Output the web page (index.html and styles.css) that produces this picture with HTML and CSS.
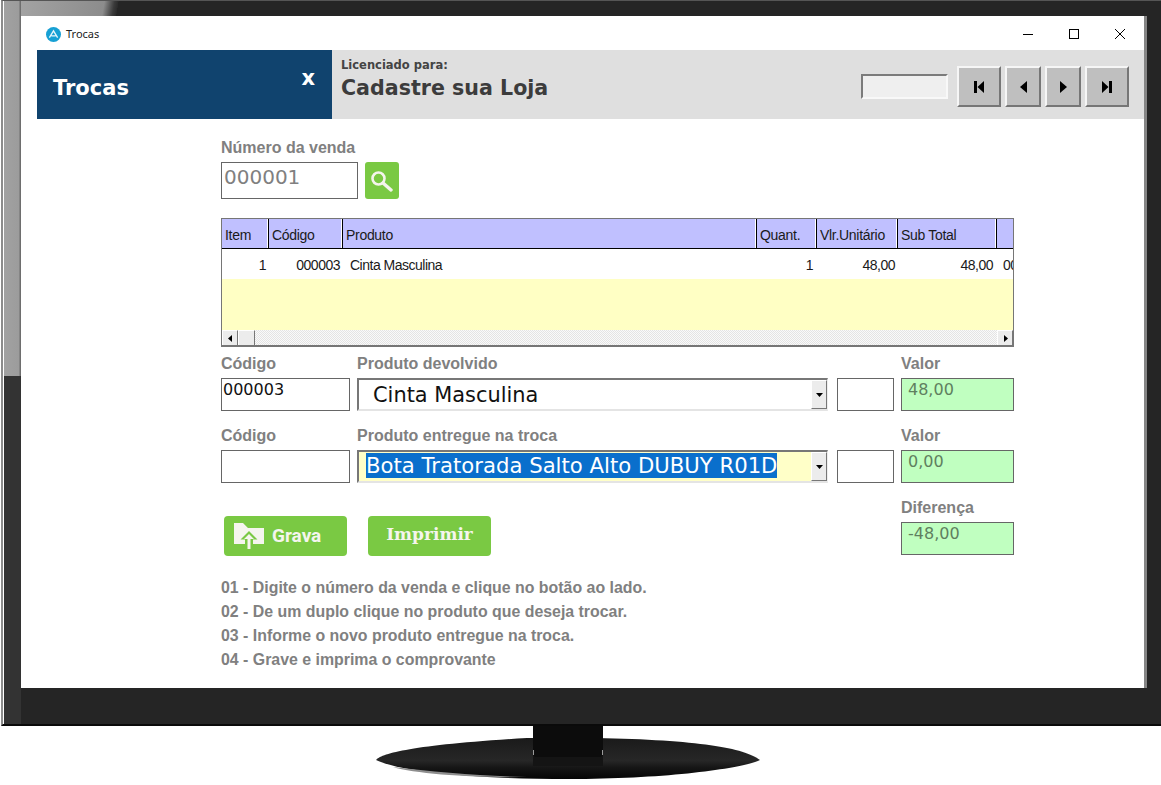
FILE: index.html
```html
<!DOCTYPE html>
<html lang="pt">
<head>
<meta charset="utf-8">
<title>Trocas</title>
<link rel="stylesheet" href="styles.css">
</head>
<body>
<div class="monitor">
  <div class="bezel">
    <main class="window">
      <div class="titlebar">
        <div class="title">
          <svg class="app-icon" width="15" height="15" viewBox="0 0 15 15"><circle cx="7.5" cy="7.5" r="7.5" fill="#17a0d4"/><path d="M3.4 10.6 7.5 3.8l4.1 6.8M5.3 8.9h4.4" fill="none" stroke="#e8f6fb" stroke-width="1.3"/></svg>
          <span>Trocas</span>
        </div>
        <div class="win-controls">
          <svg width="10" height="10" viewBox="0 0 10 10"><path d="M0 5.5h10" stroke="#000"/></svg>
          <svg width="10" height="10" viewBox="0 0 10 10"><rect x=".5" y=".5" width="9" height="9" fill="none" stroke="#000"/></svg>
          <svg width="10" height="10" viewBox="0 0 10 10"><path d="M0 0l10 10M10 0 0 10" stroke="#000"/></svg>
        </div>
      </div>

      <header class="header">
        <div class="header-blue">
          <h1>Trocas</h1>
          <span class="close-x">x</span>
        </div>
        <div class="header-grey">
          <div class="license">
            <div class="license-label">Licenciado para:</div>
            <div class="license-name">Cadastre sua Loja</div>
          </div>
          <div class="nav">
            <div class="nav-field"></div>
            <div class="nav-btn wide"><svg width="10" height="12" viewBox="0 0 10 12"><path d="M0 0h3v12H0zM10 0v12L3.500 6z"/></svg></div>
            <div class="nav-btn"><svg width="7" height="12" viewBox="0 0 7 12"><path d="M7 0v12L0 6z"/></svg></div>
            <div class="nav-btn"><svg width="7" height="12" viewBox="0 0 7 12"><path d="M0 0v12l7-6z"/></svg></div>
            <div class="nav-btn wide"><svg width="10" height="12" viewBox="0 0 10 12"><path d="M0 0v12l6.500-6zM7 0h3v12H7z"/></svg></div>
          </div>
        </div>
      </header>

      <div class="content">
        <div class="label">Número da venda</div>
        <div class="sale-row">
          <div class="field sale-field">000001</div>
          <div class="search-btn">
            <svg width="22" height="22" viewBox="0 0 22 22"><circle cx="7.500" cy="8.500" r="6" fill="none" stroke="#f4f4ec" stroke-width="2.6"/><path d="M12 13 20 20" stroke="#f4f4ec" stroke-width="3.4" stroke-linecap="round"/></svg>
          </div>
        </div>

        <div class="table">
          <div class="t-row t-head">
            <div>Item</div><div>Código</div><div>Produto</div><div>Quant.</div><div>Vlr.Unitário</div><div>Sub Total</div><div></div>
          </div>
          <div class="t-row t-body">
            <div class="num">1</div><div class="num">000003</div><div class="prod">Cinta Masculina</div><div class="num far">1</div><div class="num">48,00</div><div class="num far">48,00</div><div class="cut">00</div>
          </div>
          <div class="t-empty"></div>
          <div class="t-scroll">
            <div class="sb-btn"><svg width="5" height="7" viewBox="0 0 5 7"><path d="M4 0v7L0 3.500z"/></svg></div>
            <div class="sb-btn sb-thumb"></div>
            <div class="sb-track"></div>
            <div class="sb-btn"><svg width="5" height="7" viewBox="0 0 5 7"><path d="M1 0v7l4-3.500z"/></svg></div>
          </div>
        </div>

        <div class="form">
          <div class="label">Código</div>
          <div class="label">Produto devolvido</div>
          <div></div>
          <div class="label">Valor</div>

          <div class="field code">000003</div>
          <div class="combo">
            <div class="combo-text first">Cinta Masculina</div>
            <div class="combo-btn"><svg width="7" height="4" viewBox="0 0 7 4"><path d="M0 0h7L3.500 4z"/></svg></div>
          </div>
          <div class="field small"></div>
          <div class="field value">48,00</div>

          <div class="label second">Código</div>
          <div class="label second">Produto entregue na troca</div>
          <div></div>
          <div class="label second">Valor</div>

          <div class="field code"></div>
          <div class="combo yellow">
            <div class="combo-text"><span class="selected">Bota Tratorada Salto Alto DUBUY R01D</span></div>
            <div class="combo-btn"><svg width="7" height="4" viewBox="0 0 7 4"><path d="M0 0h7L3.500 4z"/></svg></div>
          </div>
          <div class="field small"></div>
          <div class="field value">0,00</div>
        </div>

        <div class="actions">
          <div class="buttons">
            <div class="btn btn-save">
              <svg width="30" height="26" viewBox="0 0 30 26"><path d="M0 0h9l5 5h16v16H0z" fill="#f5f5ee"/><path d="M15 8 6.500 16.500H11V26h8v-9.500h4.500z" fill="#7ac943"/><path d="M15 11 10 16h3.500v10h3V16H20z" fill="#f5f5ee"/></svg>
              <span>Grava</span>
            </div>
            <div class="btn btn-print">Imprimir</div>
          </div>
          <div class="diff">
            <div class="label">Diferença</div>
            <div class="field value">-48,00</div>
          </div>
        </div>

        <ol class="notes">
          <li>01 - Digite o número da venda e clique no botão ao lado.</li>
          <li>02 - De um duplo clique no produto que deseja trocar.</li>
          <li>03 - Informe o novo produto entregue na troca.</li>
          <li>04 - Grave e imprima o comprovante</li>
        </ol>
      </div>
    </main>
  </div>
  <div class="stand">
    <svg width="400" height="59" viewBox="0 0 400 59">
      <defs>
        <linearGradient id="base" x1="0" y1="0" x2="0" y2="1"><stop offset="0" stop-color="#1a1a1a"/><stop offset=".55" stop-color="#272727"/><stop offset=".72" stop-color="#161616"/><stop offset="1" stop-color="#050505"/></linearGradient>
      </defs>
      <path d="M7 34C12 28 40 19 158 12h69c103 2 148 10 164 22-16 8-91 19-191 19C100 53 30 45 7 34z" fill="url(#base)"/>
      <path d="M24 41c40 5 90 9 134 10-50 1-112-3-134-10z" fill="#8e8e8e"/>
      <path d="M164 28h70v12h-70z" fill="#141414"/>
      <path d="M164 0h70v29l-2 2h-66l-2-2z" fill="#0c0c0c"/>
      <path d="M164.500 24v5M233.500 24v5" stroke="#9a9a9a"/>
    </svg>
  </div>
</div>
</body>
</html>
```

FILE: styles.css
```css
* { box-sizing: border-box; }

html, body { margin: 0; padding: 0; background: #fff; }

body {
  width: 1161px;
  height: 785px;
  overflow: hidden;
  font-family: "Liberation Sans", Arial, sans-serif;
}

.monitor { width: 1161px; }

.bezel {
  height: 726px;
  margin-left: 1px;
  padding: 16px 14px 38px 18px;
  border-left: 2px solid #8c8c8c;
  border-top: 1px solid #555;
  border-bottom: 2px solid #0a0a0a;
  box-shadow: inset 1px 0 0 #fff;
  background:
    linear-gradient(to right, #a2a2a2 0, #9c9c9c 16px, #6e6e6e 17px, #6e6e6e 18px, transparent 18px) 0 0 / 100% 375px no-repeat,
    linear-gradient(to right, #333 0, #333 18px, transparent 18px) 0 375px / 100% 100% no-repeat,
    linear-gradient(100deg, #a8a8a8 0, #8c8c8c 100px, #3a3a3a 110px, #2a2a2a 114px, transparent 114px) 0 0 / 100% 15px no-repeat,
    #252525;
}

.window {
  height: 672px;
  margin-top: -1px;
  padding: 0 0 0 16px;
  background: #fff;
  border-right: 3px solid #858585;
  display: flex;
  flex-direction: column;
}

/* title bar */
.titlebar {
  height: 34px;
  flex: none;
  padding-top: 2px;
  display: flex;
  align-items: center;
  justify-content: space-between;
}

.title {
  display: flex;
  align-items: center;
  gap: 5px;
  padding-left: 9px;
  font: 11px/16px "Noto Sans", sans-serif;
  color: #222;
}

.win-controls {
  display: flex;
  gap: 36px;
  padding-right: 19px;
}

.win-controls svg { display: block; }

/* header */
.header { height: 69px; flex: none; display: flex; }

.header-blue {
  width: 295px;
  flex: none;
  background: #10436e;
  color: #fff;
  font-family: "DejaVu Sans", sans-serif;
  font-weight: 700;
  display: flex;
  justify-content: space-between;
  padding: 0 17px 0 16px;
}

.header-blue h1 { margin: 25px 0 0; font-size: 21px; line-height: 27px; font-weight: 700; }

.close-x { margin-top: 17px; font-size: 21px; line-height: 22px; }

.header-grey {
  flex: 1;
  background: #dfdfdf;
  display: flex;
  justify-content: space-between;
  padding: 0 15px 0 9px;
  font-family: "DejaVu Sans", sans-serif;
  font-weight: 700;
}

.license-label { margin-top: 9px; font-size: 11.5px; line-height: 13px; color: #444; }

.license-name { margin-top: 3px; font-size: 20.6px; line-height: 27px; color: #3c3c3c; }

.nav { display: flex; align-items: center; gap: 4px; margin-top: 4px; }

.nav-field {
  width: 87px;
  height: 25px;
  margin-right: 5px;
  background: #efefef;
  border: 2px solid;
  border-color: #7b7b7b #f8f8f8 #f8f8f8 #7b7b7b;
}

.nav-btn {
  width: 36px;
  height: 41px;
  background: #bfbfbf;
  border: 2px solid;
  border-color: #f6f6f6 #767676 #767676 #f6f6f6;
  display: flex;
  align-items: center;
  justify-content: center;
}

.nav-btn.wide { width: 44px; }

/* form */
.content { flex: 1; padding: 20px 0 0 184px; width: 977px; }

.label {
  font-size: 16px;
  line-height: 18px;
  font-weight: 700;
  color: #808080;
}

.field {
  height: 33px;
  border: 1px solid #666;
  background: #fff;
  font-family: "DejaVu Sans", sans-serif;
  font-size: 16px;
  line-height: 21px;
  padding-left: 1px;
  color: #111;
}

.sale-row { display: flex; gap: 7px; margin-top: 5px; }

.sale-field {
  width: 137px;
  height: 37px;
  font-size: 20px;
  line-height: 29px;
  padding-left: 2px;
  color: #808080;
}

.search-btn {
  width: 34px;
  height: 37px;
  background: #7ac943;
  border-radius: 3px;
  display: flex;
  align-items: center;
  justify-content: center;
}

/* table */
.table {
  margin-top: 19px;
  width: 793px;
  height: 129px;
  border: 1px solid #767676;
  border-bottom-width: 2px;
  display: flex;
  flex-direction: column;
  overflow: hidden;
  font-size: 14px;
  color: #1a1a1a;
}

.t-row {
  display: grid;
  grid-template-columns: 47px 74px 414px 60px 81px 99px 16px;
  flex: none;
}

.t-head { height: 30px; background: #000; }

.t-head > div {
  background: #c0c0ff;
  height: 29px;
  margin-right: 1px;
  border-right: 1px solid #fff;
  padding: 8px 0 0 3px;
  line-height: 16px;
  letter-spacing: -.3px;
}

.t-head > div:last-child { border-right: 0; margin-right: 0; }

.t-body { height: 30px; line-height: 32px; letter-spacing: -.5px; background: #fff; }

.t-body .num { text-align: right; padding-right: 3px; }

.t-body .num.far { padding-right: 4px; }

.t-body .prod { padding-left: 7px; }

.t-body .cut { padding-left: 6px; overflow: hidden; white-space: nowrap; }

.t-empty { height: 51px; flex: none; background: #ffffc4; }

.t-scroll { height: 16px; flex: none; display: flex; }

.sb-btn {
  width: 16px;
  height: 16px;
  flex: none;
  background: #ececec;
  border: 1px solid;
  border-color: #fff #777 #777 #fff;
  display: flex;
  align-items: center;
  justify-content: center;
}

.sb-thumb { width: 17px; }

.sb-track {
  flex: 1;
  background: repeating-conic-gradient(#e4e4e4 0 25%, #fafafa 0 50%) 0 0 / 2px 2px;
}

.form {
  margin-top: 7px;
  width: 793px;
  display: grid;
  grid-template-columns: 136px 480px 64px 113px;
  row-gap: 6px;
}

.form .label { height: 18px; padding-top: 1px; }

.form .label.second { margin-top: 9px; }

.code { width: 129px; }

.small { width: 57px; }

.value {
  background: #c0ffc0;
  color: #5f7f5f;
  padding-left: 6px;
  line-height: 22px;
}

.combo {
  width: 471px;
  height: 33px;
  background: #fff;
  border-style: solid;
  border-width: 2px 1px 2px 2px;
  border-color: #777 #eee #e4e4e4 #777;
  display: flex;
  justify-content: space-between;
}

.combo.yellow { background: #ffffc8; }

.combo-text {
  padding: 1px 0 0 7px;
  font: 21.2px/25px "DejaVu Sans", sans-serif;
  color: #111;
  white-space: nowrap;
}

.combo-text.first { padding: 3px 0 0 14px; font-size: 20.9px; }

.selected { display: inline-block; background: #0a6fcc; color: #fff; }

.combo-btn {
  width: 16px;
  height: 29px;
  background: #ececec;
  border: 1px solid;
  border-color: #fff #777 #777 #fff;
  display: flex;
  align-items: center;
  justify-content: center;
}

/* actions */
.actions {
  width: 793px;
  margin-top: 15px;
  display: flex;
  justify-content: space-between;
  align-items: flex-start;
}

.buttons { display: flex; gap: 21px; margin: 18px 0 0 3px; }

.btn {
  width: 123px;
  height: 40px;
  background: #7ac943;
  border-radius: 4px;
  color: #f5f5ee;
  display: flex;
  align-items: center;
}

.btn-save {
  gap: 8px;
  padding: 0 0 1px 10px;
  font: 700 19px/26px Roboto, sans-serif;
}

.btn-print {
  justify-content: center;
  padding-bottom: 4px;
  font: 700 17px/30px "DejaVu Serif", serif;
}

.diff { width: 113px; }

.diff .label { height: 18px; padding-top: 1px; }

.diff .field { margin-top: 6px; }

.notes {
  list-style: none;
  margin: 20px 0 0;
  padding: 0;
  font-size: 15.9px;
  line-height: 24px;
  font-weight: 700;
  color: #808080;
}

/* stand */
.stand { padding-left: 369px; }

.stand svg { display: block; }
```
